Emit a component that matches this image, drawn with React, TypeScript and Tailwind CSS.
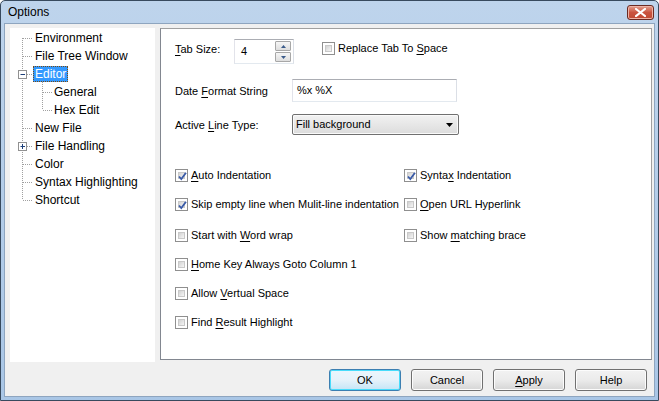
import React from 'react';

const FONT = { fontFamily: '"Liberation Sans", Arial, sans-serif' };

type TreeNode = { label: string; level: number; box?: '+' | '-'; selected?: boolean };

const tree: TreeNode[] = [
  { label: 'Environment', level: 0 },
  { label: 'File Tree Window', level: 0 },
  { label: 'Editor', level: 0, box: '-', selected: true },
  { label: 'General', level: 1 },
  { label: 'Hex Edit', level: 1 },
  { label: 'New File', level: 0 },
  { label: 'File Handling', level: 0, box: '+' },
  { label: 'Color', level: 0 },
  { label: 'Syntax Highlighting', level: 0 },
  { label: 'Shortcut', level: 0 },
];

function U({ children }: { children: React.ReactNode }) {
  return <span className="underline underline-offset-[2px]">{children}</span>;
}

function CheckBox({ checked }: { checked?: boolean }) {
  return (
    <span className="relative inline-flex h-[13px] w-[13px] shrink-0 border border-[#8f8f8f] bg-white p-[2px]">
      <span className="block h-full w-full border border-[#c9c9c9] bg-gradient-to-br from-[#d2d2d2] to-[#f6f6f6]" />
      {checked && (
        <svg className="absolute left-[1px] top-[1px]" width="11" height="11" viewBox="0 0 11 11">
          <path d="M2 5.5 L4.3 8 L9 1.8" fill="none" stroke="#3a5ba8" strokeWidth="1.8" />
        </svg>
      )}
    </span>
  );
}

function Check({ checked, children }: { checked?: boolean; children: React.ReactNode }) {
  return (
    <div className="flex items-center gap-[2px] text-[11px] text-black">
      <CheckBox checked={checked} />
      <span className="pl-[1px]">{children}</span>
    </div>
  );
}

function TreeLines() {
  // dotted connectors of the tree view
  const rowY = (i: number) => 10 + i * 18;
  const lines: React.ReactNode[] = [];
  lines.push(<line key="v0" x1="12.5" y1={rowY(0)} x2="12.5" y2={rowY(9)} />);
  lines.push(<line key="v1" x1="32.5" y1={rowY(2) + 8} x2="32.5" y2={rowY(4)} />);
  tree.forEach((n, i) => {
    const y = rowY(i) + 0.5;
    if (n.level === 0) lines.push(<line key={'h' + i} x1="13" y1={y} x2="23" y2={y} />);
    else lines.push(<line key={'h' + i} x1="33" y1={y} x2="42" y2={y} />);
  });
  return (
    <svg className="pointer-events-none absolute left-0 top-0" width="145" height="200">
      <g stroke="#a0a0a0" strokeWidth="1" strokeDasharray="1 1">{lines}</g>
      {tree.map((n, i) =>
        n.box ? (
          <g key={'b' + i}>
            <rect x="8.5" y={rowY(i) - 4 + 0.5} width="8" height="8" fill="#fff" stroke="#919191" />
            <line x1="10.5" y1={rowY(i) + 0.5} x2="15" y2={rowY(i) + 0.5} stroke="#1d3f7a" />
            {n.box === '+' && <line x1="12.5" y1={rowY(i) - 2} x2="12.5" y2={rowY(i) + 3} stroke="#1d3f7a" />}
          </g>
        ) : null
      )}
    </svg>
  );
}

function Tree() {
  return (
    <div className="relative h-[334px] w-[145px] shrink-0 bg-white pt-[1px] text-[12px] text-black">
      <TreeLines />
      {tree.map((n) => (
        <div key={n.label} className={`flex h-[18px] items-center ${n.level === 0 ? 'pl-[23px]' : 'pl-[42px]'}`}>
          <span
            className={
              n.selected
                ? 'h-[16px] border border-dotted border-[#7a4a10] bg-[#3399ff] px-[1px] leading-[14px] text-white'
                : 'px-[2px]'
            }
          >
            {n.label}
          </span>
        </div>
      ))}
    </div>
  );
}

function SpinBox() {
  return (
    <div className="flex h-[25px] w-[60px] items-center border border-[#abadb3] border-l-[#e2e3ea] border-r-[#dbdfe6] border-b-[#e3e9ef] bg-white pl-[6px] pr-[2px]">
      <span className="flex-1 text-[11px]">4</span>
      <div className="flex flex-col gap-[1px]">
        {[0, 1].map((i) => (
          <div
            key={i}
            className="flex h-[10px] w-[16px] items-center justify-center rounded-[1px] border border-[#a7a7a7] bg-gradient-to-b from-[#f6f6f6] to-[#dedede]"
          >
            <svg width="5" height="3" viewBox="0 0 5 3">
              {i === 0 ? <path d="M0 3 L2.5 0 L5 3 Z" fill="#3b5b8a" /> : <path d="M0 0 L2.5 3 L5 0 Z" fill="#3b5b8a" />}
            </svg>
          </div>
        ))}
      </div>
    </div>
  );
}

function Button({ children, primary }: { children: React.ReactNode; primary?: boolean }) {
  return (
    <div
      className={`flex h-[22px] w-[72px] items-center justify-center rounded-[3px] border text-[11px] text-black ${
        primary
          ? 'border-[#3c7fb1] bg-gradient-to-b from-[#eaf6fd] via-[#e6f2fa] to-[#c4e5f6] shadow-[inset_0_0_0_1px_#48dcfb]'
          : 'border-[#707070] bg-gradient-to-b from-[#f2f2f2] via-[#ebebeb] to-[#d5d5d5] shadow-[inset_0_0_0_1px_#fcfcfc]'
      }`}
    >
      {children}
    </div>
  );
}

function Panel() {
  return (
    <div className="h-[332px] w-[492px] shrink-0 border border-[#a0a0a0] border-l-[#828790] border-b-[#828790] bg-white pl-[14px] pt-[10px] text-[11px] text-black">
      <div className="flex items-center">
        <span className="mt-[-4px] w-[59px]">
          <U>T</U>ab Size:
        </span>
        <SpinBox />
        <div className="ml-[28px] mt-[-7px]">
          <Check>
            Replace Tab To <U>S</U>pace
          </Check>
        </div>
      </div>
      <div className="mt-[15px] flex items-center">
        <span className="w-[117px] pt-[2px]">
          Date <U>F</U>ormat String
        </span>
        <div className="flex h-[23px] w-[165px] items-center border border-[#abadb3] border-l-[#e2e3ea] border-r-[#dbdfe6] border-b-[#e3e9ef] bg-white pl-[4px]">
          %x %X
        </div>
      </div>
      <div className="mt-[12px] flex items-center">
        <span className="w-[117px] pt-[2px]">
          Active <U>L</U>ine Type:
        </span>
        <div className="flex h-[21px] w-[167px] items-center rounded-[2px] border border-[#707070] bg-gradient-to-b from-[#f2f2f2] to-[#dcdcdc] pl-[3px] pr-[5px] shadow-[inset_0_0_0_1px_#fafafa]">
          <span className="flex-1">Fill background</span>
          <svg width="7" height="4" viewBox="0 0 7 4">
            <path d="M0 0 L7 0 L3.5 4 Z" fill="#000" />
          </svg>
        </div>
      </div>
      <div className="mt-[33px] flex">
        <div className="flex w-[229px] flex-col">
          <div className="flex h-[14px] items-center">
            <Check checked>
              <U>A</U>uto Indentation
            </Check>
          </div>
          <div className="mt-[15px] flex h-[14px] items-center">
            <Check checked>Skip empty line when Mulit-line indentation</Check>
          </div>
          <div className="mt-[17px] flex h-[14px] items-center">
            <Check>
              Start with <U>W</U>ord wrap
            </Check>
          </div>
          <div className="mt-[15px] flex h-[14px] items-center">
            <Check>
              <U>H</U>ome Key Always Goto Column 1
            </Check>
          </div>
          <div className="mt-[15px] flex h-[14px] items-center">
            <Check>
              Allow <U>V</U>ertual Space
            </Check>
          </div>
          <div className="mt-[15px] flex h-[14px] items-center">
            <Check>
              Find <U>R</U>esult Highlight
            </Check>
          </div>
        </div>
        <div className="flex flex-col">
          <div className="flex h-[14px] items-center">
            <Check checked>
              Synta<U>x</U> Indentation
            </Check>
          </div>
          <div className="mt-[15px] flex h-[14px] items-center">
            <Check>
              <U>O</U>pen URL Hyperlink
            </Check>
          </div>
          <div className="mt-[17px] flex h-[14px] items-center">
            <Check>
              Show <U>m</U>atching brace
            </Check>
          </div>
        </div>
      </div>
    </div>
  );
}

export default function App() {
  return (
    <div
      className="flex h-[401px] w-[659px] flex-col overflow-hidden rounded-t-[5px] border border-[#384a5e] bg-gradient-to-b from-[#bed4ec] to-[#a9c6e6]"
      style={FONT}
    >
      <div className="flex h-[22px] shrink-0 items-center pl-[7px] pr-[4px]">
        <span className="flex-1 text-[12px] text-black">Options</span>
        <div className="flex h-[15px] w-[27px] items-center justify-center rounded-[3px] border border-[#6b2a22] bg-gradient-to-b from-[#e3a08f] via-[#c9533f] to-[#c04a33] shadow-[inset_0_0_0_1px_#eeb3a6]">
          <svg width="11" height="9" viewBox="0 0 11 9">
            <path d="M1 1 L10 8 M10 1 L1 8" stroke="#fff" strokeWidth="2.2" strokeLinecap="square" />
          </svg>
        </div>
      </div>
      <div className="mx-[3px] mb-[3px] flex flex-1 flex-col border border-[#8ea5bf] bg-[#f0f0f0] px-[5px] pt-[4px]">
        <div className="flex gap-[5px]">
          <Tree />
          <Panel />
        </div>
        <div className="mt-[7px] flex justify-end gap-[10px] pr-[2px]">
          <Button primary>OK</Button>
          <Button>Cancel</Button>
          <Button>
            <U>A</U>pply
          </Button>
          <Button>Help</Button>
        </div>
      </div>
    </div>
  );
}
